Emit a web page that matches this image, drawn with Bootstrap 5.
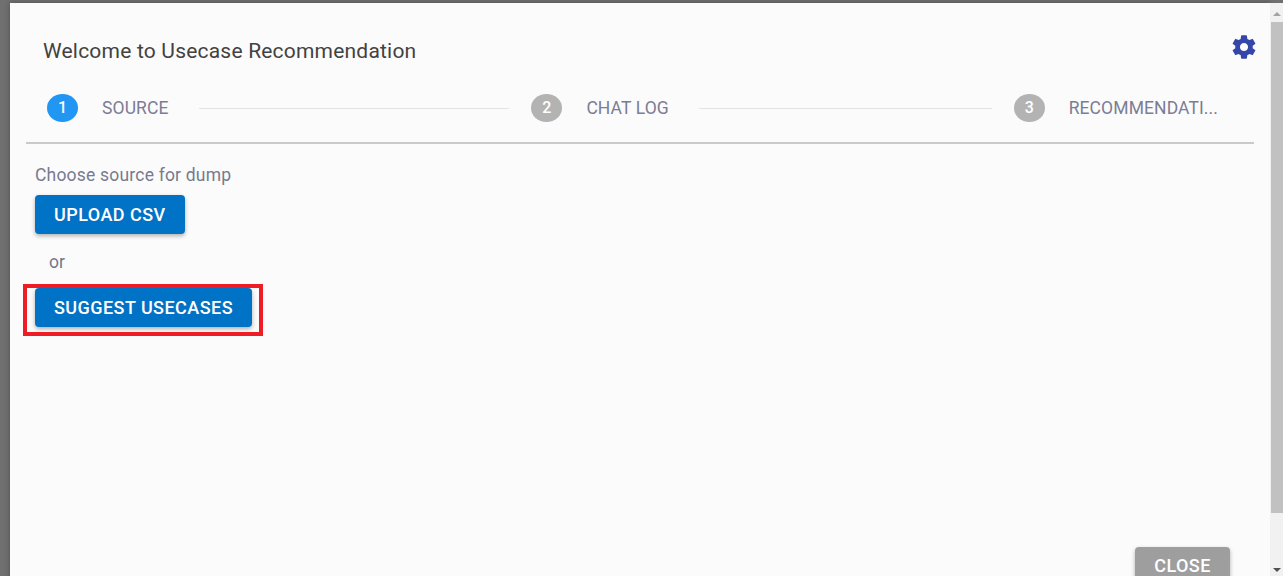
<!DOCTYPE html>
<html lang="en">
<head>
<meta charset="utf-8">
<title>Usecase Recommendation</title>
<link href="https://cdn.jsdelivr.net/npm/bootstrap@5.3.0/dist/css/bootstrap.min.css" rel="stylesheet">
<style>
html,body{height:576px;overflow:hidden;background:#707070;font-family:Roboto,"Liberation Sans",sans-serif}
.shell{height:576px;padding:3px 0 0 10px}
.panel{background:#fbfbfb;width:1260px;height:600px;padding:0 16px 0 16px;position:relative;box-shadow:0 0 6px rgba(0,0,0,.3)}
.head{padding:37px 0 0 17px;height:71px}
.head h1{font-size:21px;font-weight:400;color:#424242;margin:0;line-height:23px;letter-spacing:.2px}
.gear{width:28px;height:28px;margin:-7px -4px 0 0;fill:#3546ab}
.stepper{height:70px;border-bottom:2px solid #c9c9c9;padding:0 36px 0 21px}
.stepper .num{width:31px;height:28px;border-radius:50%;color:#fff;font-size:16px;font-weight:500;background:#b3b3b3;flex:none}
.stepper .num.on{background:#2196f3}
.label{font-size:17.5px;color:#7b7d95;margin-left:24px;white-space:nowrap;letter-spacing:.1px}
.rule{height:1px;background:#e4e4e4;margin-left:30px}
.body{padding:22px 9px 0}
.body p{font-size:17.5px;color:#777a90;margin:-1px 0 10px;line-height:20px;letter-spacing:.2px}
.act{background:#0073c6;color:#fff;font-size:18px;font-weight:500;border:0;border-radius:4px;height:39px;padding:0 19px 1px;box-shadow:0 2px 4px rgba(0,0,0,.3);letter-spacing:.45px}
.or{font-size:17.5px;color:#74778c;padding-left:14px;line-height:20px;margin:18px 0 16px}
.mark-box{position:absolute;left:13px;top:281px;width:240px;height:52px;border:4px solid #ee1c25}
.foot{position:absolute;left:1125px;top:544px}
.closer{background:#9e9e9e;color:#fff;font-size:18px;font-weight:500;border:0;border-radius:4px;height:39px;width:95px;padding:0 0 2px;box-shadow:0 2px 4px rgba(0,0,0,.3);letter-spacing:.45px}
.scroller{position:absolute;right:0;top:3px;bottom:0;width:13px;background:#f1f1f1}
.scroller .thumb{position:absolute;left:1px;right:0;top:19px;height:491px;background:#c1c1c1}
.tri{position:absolute;left:3px;width:0;height:0;border-left:4px solid transparent;border-right:4px solid transparent}
.tri.up{top:9px;border-bottom:4px solid #a3a3a3}
.tri.down{bottom:4px;border-top:4px solid #505050}
</style>
</head>
<body>
<div class="shell">
  <div class="panel">
    <div class="head d-flex justify-content-between align-items-start">
      <h1>Welcome to Usecase Recommendation</h1>
      <svg class="gear" viewBox="0 0 24 24" aria-hidden="true"><path d="M19.43 12.98c.04-.32.07-.64.07-.98s-.03-.66-.07-.98l2.11-1.65c.19-.15.24-.42.12-.64l-2-3.46c-.12-.22-.39-.3-.61-.22l-2.49 1c-.52-.4-1.08-.73-1.69-.98l-.38-2.65A.488.488 0 0 0 14 2h-4c-.25 0-.46.18-.49.42l-.38 2.65c-.61.25-1.17.59-1.69.98l-2.49-1c-.23-.09-.49 0-.61.22l-2 3.46c-.13.22-.07.49.12.64l2.11 1.65c-.04.32-.07.65-.07.98s.03.66.07.98l-2.11 1.65c-.19.15-.24.42-.12.64l2 3.46c.12.22.39.3.61.22l2.49-1c.52.4 1.08.73 1.69.98l.38 2.65c.03.24.24.42.49.42h4c.25 0 .46-.18.49-.42l.38-2.65c.61-.25 1.17-.59 1.69-.98l2.49 1c.23.09.49 0 .61-.22l2-3.46c.12-.22.07-.49-.12-.64l-2.11-1.65zM12 15.5c-1.93 0-3.5-1.57-3.5-3.5s1.57-3.5 3.5-3.5 3.5 1.57 3.5 3.5-1.57 3.5-3.5 3.5z"/></svg>
    </div>
    <div class="stepper d-flex align-items-center">
      <div class="num on d-flex align-items-center justify-content-center">1</div>
      <div class="label">SOURCE</div>
      <div class="rule" style="width:311px"></div>
      <div class="num d-flex align-items-center justify-content-center" style="margin-left:22px">2</div>
      <div class="label">CHAT LOG</div>
      <div class="rule" style="width:293px"></div>
      <div class="num d-flex align-items-center justify-content-center" style="margin-left:22px">3</div>
      <div class="label">RECOMMENDATI...</div>
    </div>
    <div class="body">
      <p>Choose source for dump</p>
      <button type="button" class="btn act d-block">UPLOAD CSV</button>
      <div class="or">or</div>
      <button type="button" class="btn act d-block">SUGGEST USECASES</button>
    </div>
    <div class="mark-box"></div>
    <div class="foot"><button type="button" class="btn closer">CLOSE</button></div>
  </div>
</div>
<div class="scroller"><div class="tri up"></div><div class="thumb"></div><div class="tri down"></div></div>
</body>
</html>
